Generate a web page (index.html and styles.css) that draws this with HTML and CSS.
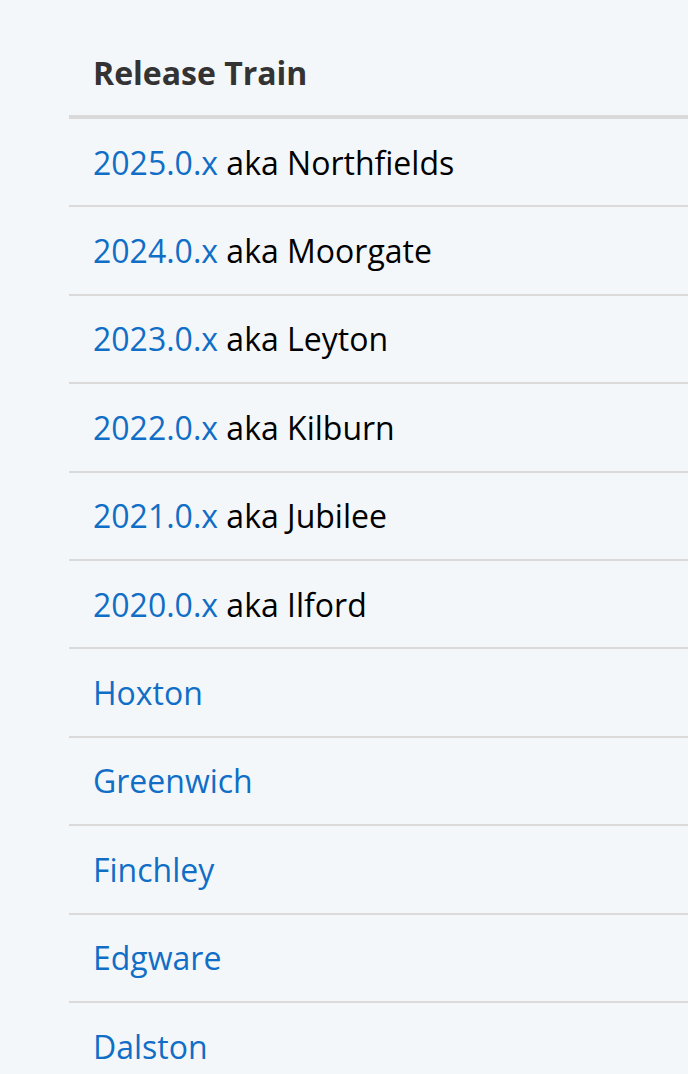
FILE: index.html
```html
<!DOCTYPE html>
<html lang="en">
<head>
<meta charset="utf-8">
<title>Release Trains</title>
<link rel="stylesheet" href="styles.css">
</head>
<body>
<div class="page">
  <table class="trains">
    <thead>
      <tr><th>Release Train</th></tr>
    </thead>
    <tbody>
      <tr><td><a href="#">2025.0.x</a> aka Northfields</td></tr>
      <tr><td><a href="#">2024.0.x</a> aka Moorgate</td></tr>
      <tr><td><a href="#">2023.0.x</a> aka Leyton</td></tr>
      <tr><td><a href="#">2022.0.x</a> aka Kilburn</td></tr>
      <tr><td><a href="#">2021.0.x</a> aka Jubilee</td></tr>
      <tr><td><a href="#">2020.0.x</a> aka Ilford</td></tr>
      <tr><td><a href="#">Hoxton</a></td></tr>
      <tr><td><a href="#">Greenwich</a></td></tr>
      <tr><td><a href="#">Finchley</a></td></tr>
      <tr><td><a href="#">Edgware</a></td></tr>
      <tr><td><a href="#">Dalston</a></td></tr>
    </tbody>
  </table>
</div>
</body>
</html>
```
FILE: styles.css
```css
html, body {
  margin: 0;
  padding: 0;
  background: #f4f7fa;
}
body {
  font-family: "Open Sans", "Noto Sans", sans-serif;
  font-size: 32px;
  color: #000;
  overflow: hidden;
}
.page {
  padding: 29px 0 0 69px;
}
.trains {
  width: 100%;
  border-collapse: collapse;
  border-spacing: 0;
}
.trains th,
.trains td {
  text-align: left;
  line-height: 48px;
  padding: 19.6px 24px 18.8px;
}
.trains th {
  padding-top: 20px;
  padding-bottom: 18px;
  font-weight: 700;
  color: #333;
  border-bottom: 4px solid #dadada;
}
.trains td {
  border-bottom: 2px solid #dadada;
}
.trains a {
  color: #106ec6;
  text-decoration: none;
}
```
